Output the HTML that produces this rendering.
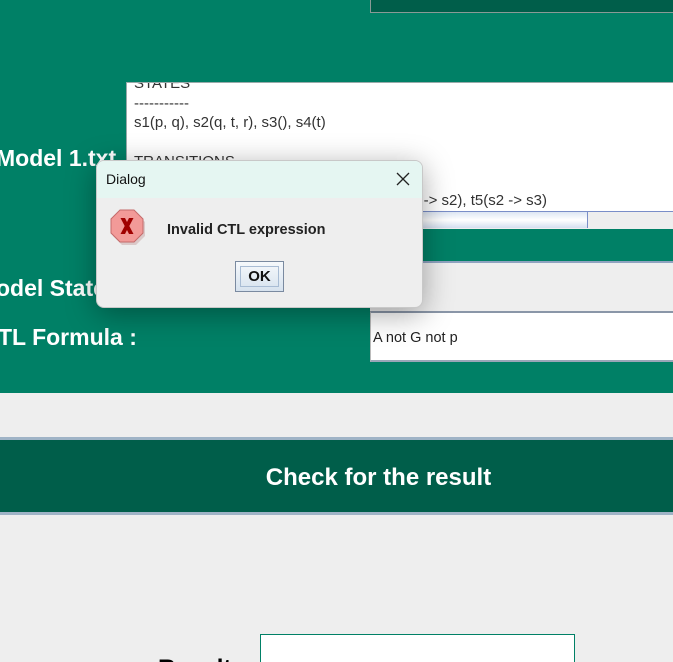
<!DOCTYPE html>
<html style="width:673px;height:662px;overflow:hidden"><head><style>
body{margin:0;width:673px;height:662px;overflow:hidden;background:#eeeeee;font-family:"Liberation Sans",Arial,sans-serif;position:relative}
.abs{position:absolute}
.lbl{color:#fff;font-weight:bold;font-size:23px;white-space:nowrap}
</style></head><body>
<div class="abs" style="left:0;top:0;width:673px;height:393px;background:#008066"></div>
<div class="abs" style="left:370px;top:-2px;width:303px;height:13px;background:#005e4a;border:1px solid #8a9a96"></div>
<!-- text area -->
<div class="abs" style="left:126px;top:82px;width:547px;height:129px;background:#fff;border-top:1px solid #9aa;border-left:1px solid #9aa;overflow:hidden;font-size:15px;color:#333;line-height:19.5px">
 <div style="position:absolute;left:7px;top:-9px;white-space:pre">STATES
-----------
s1(p, q), s2(q, t, r), s3(), s4(t)

TRANSITIONS
-----------</div>
 <div style="position:absolute;right:127px;top:108px;white-space:pre">t1(s1 -> s1), t2(s1 -> s2), t3(s4 -> s2), t5(s2 -> s3)</div>
</div>
<div class="abs" style="left:126px;top:211px;width:547px;height:17px;background:#eee;border-top:1px solid #7a8ec8"></div>
<div class="abs" style="left:130px;top:212px;width:457px;height:16px;background:linear-gradient(#dde6f3,#fff 50%,#d4dff0);border-right:1px solid #7a8ec8"></div>
<div class="abs" style="left:370px;top:261px;width:303px;height:48px;background:#eeeeee;border-top:2px solid #8fa3c0"></div>
<div class="abs" style="left:370px;top:311px;width:303px;height:47px;background:#fff;border-top:2px solid #8a96a8;border-left:1px solid #bbb;border-bottom:2px solid #9aa6b8"></div>
<div class="abs" style="left:373px;top:330px;font-size:14.5px;color:#222">A not G not p</div>
<div class="abs lbl" style="left:-4px;top:145px">Model 1.txt</div>
<div class="abs lbl" style="left:-4px;top:275px">odel States :</div>
<div class="abs lbl" style="left:-2px;top:324px">TL Formula :</div>
<!-- button -->
<div class="abs" style="left:0;top:437px;width:673px;height:78px;background:#005e4a;border-top:3px solid #9fb3c6;border-bottom:3px solid #9fb3c6;box-sizing:border-box"></div>
<div class="abs" style="left:0;top:464px;width:757px;text-align:center;color:#fff;font-weight:bold;font-size:24px">Check for the result</div>
<div class="abs" style="left:158px;top:655px;font-weight:bold;font-size:24px;color:#000;height:7px;overflow:visible">Result:</div>
<div class="abs" style="left:260px;top:634px;width:313px;height:28px;background:#fff;border:1px solid #008066;border-bottom:none"></div>
<!-- dialog -->
<div class="abs" style="left:96px;top:160px;width:327px;height:148px;border-radius:8px;background:#eeeeee;border:1px solid #c8c8c8;box-sizing:border-box;box-shadow:0 6px 30px rgba(0,0,0,.35);overflow:hidden">
 <div style="height:37px;background:#e5f6f2;position:relative">
  <div style="position:absolute;left:9px;top:10px;font-size:14px;color:#111">Dialog</div>
  <svg style="position:absolute;left:299px;top:11px" width="14" height="14"><path d="M1 1L13 13M13 1L1 13" stroke="#222" stroke-width="1.3"/></svg>
 </div>
 <svg style="position:absolute;left:13px;top:48px" width="38" height="38">
  <polygon points="10,1 24,1 33,10 33,24 24,33 10,33 1,24 1,10" fill="#a35c5c" opacity=".25" transform="translate(2,3)"/>
  <polygon points="10,1 24,1 33,10 33,24 24,33 10,33 1,24 1,10" fill="#f29a98" stroke="#c46a6a"/>
  <path d="M10.5 9h4.5l2 4 2-4h4.5l-4.2 8 4.2 8h-4.5l-2-4-2 4h-4.5l4.2-8z" fill="#a00000"/>
 </svg>
 <div style="position:absolute;left:70px;top:61px;font-weight:bold;font-size:14.5px;color:#222">Invalid CTL expression</div>
 <div style="position:absolute;left:138px;top:100px;width:49px;height:31px;border:1px solid #7a8aa0;box-sizing:border-box;background:linear-gradient(#f6f9fc,#d6e2ee)">
  <div style="position:absolute;left:4px;top:4px;width:39px;height:21px;border:1px solid #a8bcd4;box-sizing:border-box;text-align:center;font-weight:bold;font-size:15px;line-height:19px;color:#111">OK</div>
 </div>
</div>
</body></html>
